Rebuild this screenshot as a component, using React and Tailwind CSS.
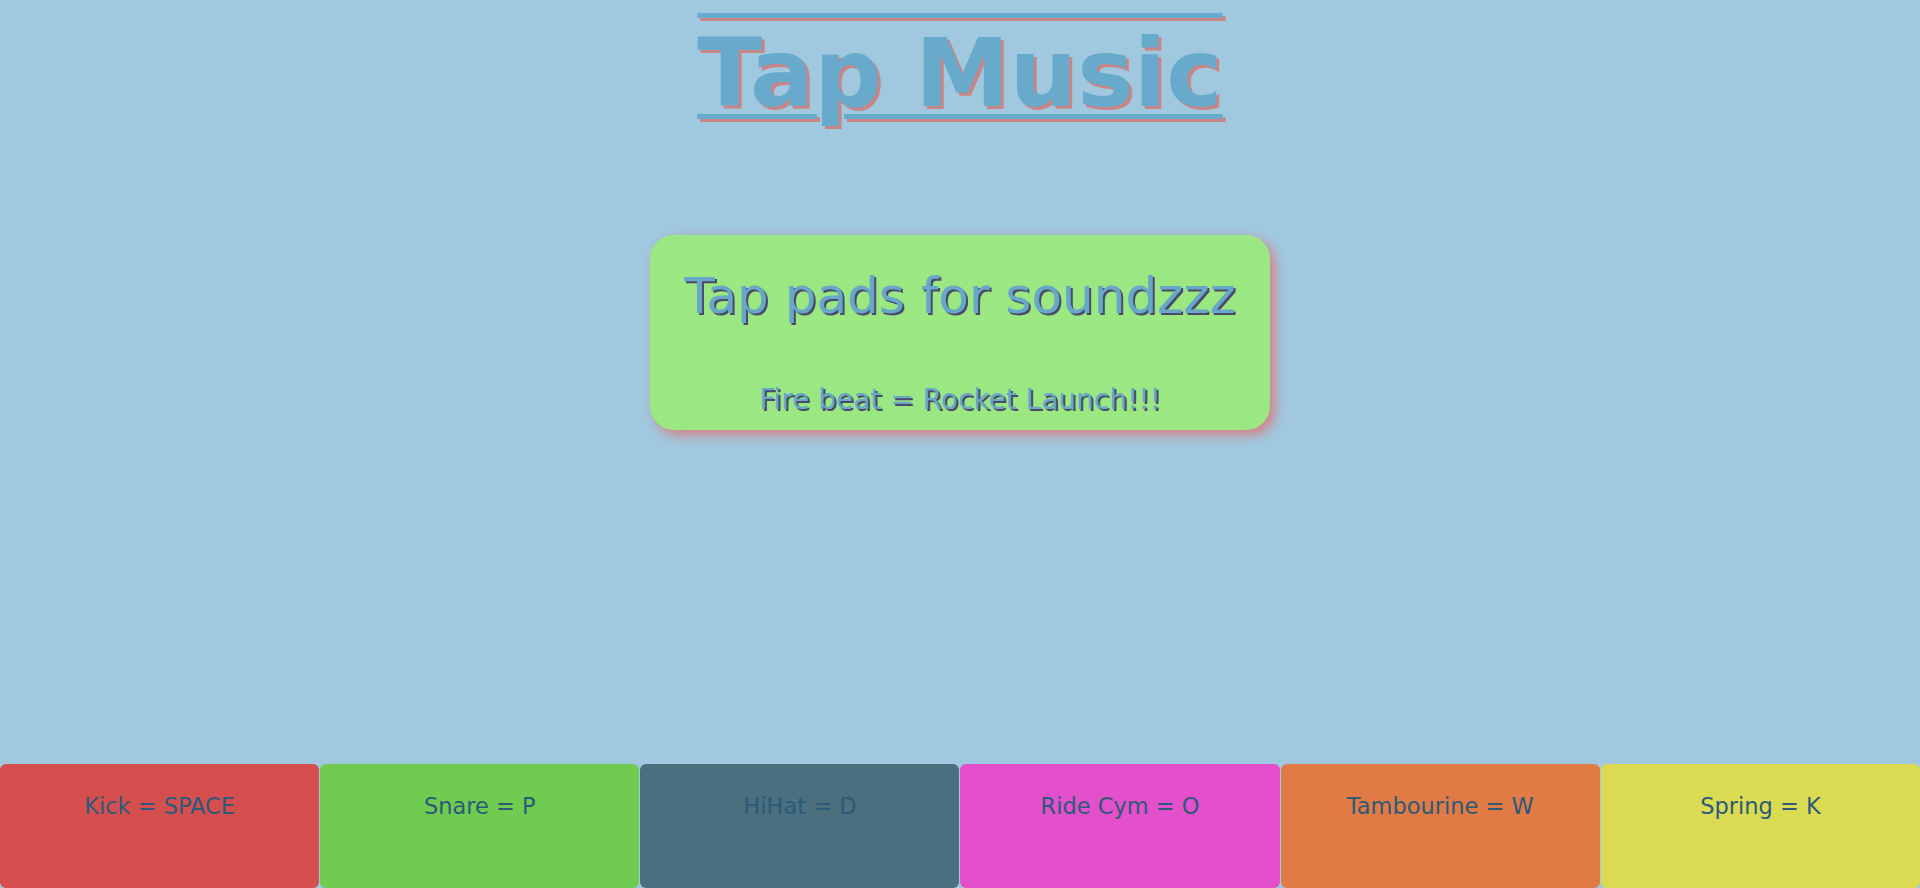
import React from 'react';

const pads = [
  { label: 'Kick = SPACE', bg: 'bg-[#d64f4f]' },
  { label: 'Snare = P', bg: 'bg-[#70cc50]' },
  { label: 'HiHat = D', bg: 'bg-[#4a6f7e]' },
  { label: 'Ride Cym = O', bg: 'bg-[#e44fcb]' },
  { label: 'Tambourine = W', bg: 'bg-[#e07b45]' },
  { label: 'Spring = K', bg: 'bg-[#dadb53]' },
];

export default function App() {
  return (
    <div className="h-[888px] overflow-hidden bg-[#a0c9df] flex flex-col font-['DejaVu_Sans',sans-serif]">
      {/* title */}
      <h1 className="self-center text-[95px] leading-none font-bold text-[#67aacb] [text-decoration-line:underline_overline] decoration-[5px] underline-offset-[8px] [text-shadow:3px_3px_0_#c98585] mt-[26px]">
        Tap Music
      </h1>

      {/* info card */}
      <div className="mx-auto mt-[114px] w-[620px] h-[195px] rounded-[24px] bg-[#9be782] shadow-[5px_5px_12px_rgba(225,110,110,0.8)] flex flex-col items-center text-[#67a8c8] [text-shadow:2px_2px_0_#4a4a6a]">
        <p className="text-[50px] leading-none mt-[36px]">Tap pads for soundzzz</p>
        <p className="text-[28px] leading-none mt-auto mb-[16px]">Fire beat = Rocket Launch!!!</p>
      </div>

      {/* pads */}
      <div className="mt-auto grid grid-cols-6 gap-px h-[124px]">
        {pads.map((p) => (
          <div key={p.label} className={`${p.bg} rounded-[6px] text-center text-[22.5px] leading-none text-[#2c5a78] pt-[31px]`}>
            {p.label}
          </div>
        ))}
      </div>
    </div>
  );
}
